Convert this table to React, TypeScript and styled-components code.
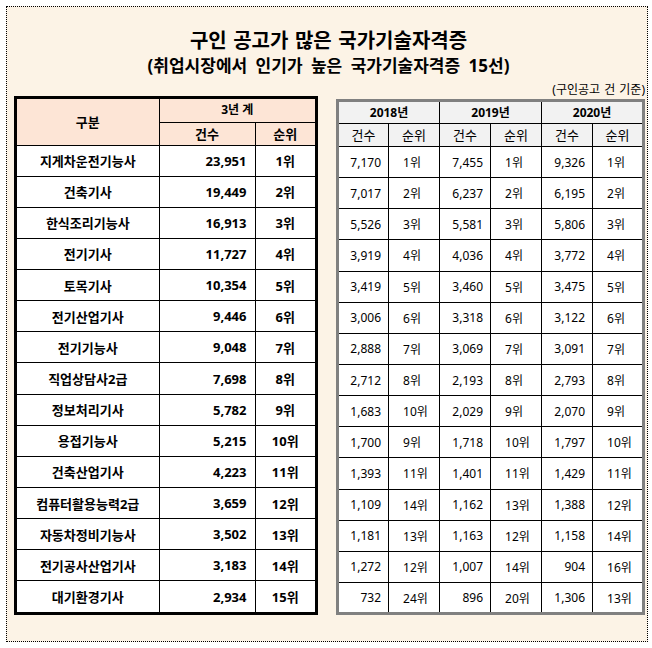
import React from "react";
import styled, { createGlobalStyle } from "styled-components";

const GlobalStyle = createGlobalStyle`
  html, body { margin: 0; padding: 0; background: #fff; }
  body { font-family: "Noto Sans", "Noto Sans CJK KR", sans-serif; color: #000; }
`;

const Frame = styled.div`
  box-sizing: border-box;
  margin: 6px 0 0 6px;
  width: 642px;
  height: 636px;
  border: 1px dotted #000;
  background: #fcf3e6;
  padding: 21px 4px 0 7px;
  display: flex;
  flex-direction: column;
`;

const Title = styled.h1`
  margin: 0;
  font-family: "Noto Sans CJK KR", sans-serif;
  font-size: 20px;
  font-weight: 700;
  line-height: 24px;
  word-spacing: 2px;
  text-align: center;
`;

const Subtitle = styled.h2`
  margin: 3px 0 0;
  font-family: "Noto Sans", "Noto Sans CJK KR", sans-serif;
  font-size: 17px;
  font-weight: 700;
  line-height: 21px;
  word-spacing: 4px;
  text-align: center;
`;

const TablesRow = styled.div`
  display: flex;
  align-items: flex-end;
  gap: 18px;
  margin-top: 7px;
`;

const Column = styled.div`
  display: flex;
  flex-direction: column;
  align-items: flex-end;
`;

const Note = styled.div`
  font-family: "Noto Sans", "Noto Sans CJK KR", sans-serif;
  font-size: 12px;
  line-height: 14px;
  word-spacing: 1px;
  margin-bottom: 2px;
`;

const ThickBox = styled.div`
  border: 3px solid #000;
  background: #fff;
`;

const Table = styled.table<{ $w: number }>`
  border-collapse: collapse;
  table-layout: fixed;
  width: ${(p) => p.$w}px;
  background: #fff;
  border-style: ${(p) => (p.$w < 300 ? "hidden" : "solid")};
`;

const HeadCell = styled.th<{ $bg: string; $bold?: boolean; $size?: number }>`
  background: ${(p) => p.$bg};
  border: 1px solid #000;
  font-weight: ${(p) => (p.$bold ? 700 : 400)};
  font-size: ${(p) => p.$size ?? 13}px;
  text-align: center;
  padding: 0;
  line-height: 14px;
`;

const HeadRow = styled.tr<{ $h: number }>`
  height: ${(p) => p.$h}px;
`;

const BodyRow = styled.tr`
  height: 31.15px;
`;

const NameCell = styled.td`
  border: 1px solid #000;
  text-align: center;
  font-weight: 700;
  font-size: 13px;
  padding: 0;
`;

const BigNum = styled.td`
  border: 1px solid #000;
  text-align: right;
  font-weight: 700;
  font-size: 13px;
  padding: 0 8px 0 0;
`;

const BigRank = styled.td`
  border: 1px solid #000;
  text-align: center;
  font-weight: 700;
  font-size: 13px;
  padding: 0;
`;

const SmallNum = styled.td`
  border: 1px solid #000;
  text-align: right;
  font-size: 12px;
  padding: 0 7px 0 0;
`;

const SmallRank = styled.td`
  border: 1px solid #000;
  text-align: left;
  font-size: 12px;
  padding: 0 0 0 14px;
`;

const rows: string[][] = [
  ["지게차운전기능사", "23,951", "1위", "7,170", "1위", "7,455", "1위", "9,326", "1위"],
  ["건축기사", "19,449", "2위", "7,017", "2위", "6,237", "2위", "6,195", "2위"],
  ["한식조리기능사", "16,913", "3위", "5,526", "3위", "5,581", "3위", "5,806", "3위"],
  ["전기기사", "11,727", "4위", "3,919", "4위", "4,036", "4위", "3,772", "4위"],
  ["토목기사", "10,354", "5위", "3,419", "5위", "3,460", "5위", "3,475", "5위"],
  ["전기산업기사", "9,446", "6위", "3,006", "6위", "3,318", "6위", "3,122", "6위"],
  ["전기기능사", "9,048", "7위", "2,888", "7위", "3,069", "7위", "3,091", "7위"],
  ["직업상담사2급", "7,698", "8위", "2,712", "8위", "2,193", "8위", "2,793", "8위"],
  ["정보처리기사", "5,782", "9위", "1,683", "10위", "2,029", "9위", "2,070", "9위"],
  ["용접기능사", "5,215", "10위", "1,700", "9위", "1,718", "10위", "1,797", "10위"],
  ["건축산업기사", "4,223", "11위", "1,393", "11위", "1,401", "11위", "1,429", "11위"],
  ["컴퓨터활용능력2급", "3,659", "12위", "1,109", "14위", "1,162", "13위", "1,388", "12위"],
  ["자동차정비기능사", "3,502", "13위", "1,181", "13위", "1,163", "12위", "1,158", "14위"],
  ["전기공사산업기사", "3,183", "14위", "1,272", "12위", "1,007", "14위", "904", "16위"],
  ["대기환경기사", "2,934", "15위", "732", "24위", "896", "20위", "1,306", "13위"],
];

const PEACH = "#fde5d6";
const GRAY = "#f2f2f2";

export default function App() {
  return (
    <>
      <GlobalStyle />
      <Frame>
        <Title>구인 공고가 많은 국가기술자격증</Title>
        <Subtitle>(취업시장에서 인기가 높은 국가기술자격증 15선)</Subtitle>
        <TablesRow>
          <Column>
            <ThickBox>
              <Table $w={298}>
                <colgroup>
                  <col style={{ width: 142 }} />
                  <col style={{ width: 96 }} />
                  <col style={{ width: 60 }} />
                </colgroup>
                <thead>
                  <HeadRow $h={23}>
                    <HeadCell $bg={PEACH} $bold rowSpan={2}>구분</HeadCell>
                    <HeadCell $bg={PEACH} $bold $size={12} colSpan={2}>3년 계</HeadCell>
                  </HeadRow>
                  <HeadRow $h={23}>
                    <HeadCell $bg={PEACH} $bold>건수</HeadCell>
                    <HeadCell $bg={PEACH} $bold>순위</HeadCell>
                  </HeadRow>
                </thead>
                <tbody>
                  {rows.map((r) => (
                    <BodyRow key={r[0]}>
                      <NameCell>{r[0]}</NameCell>
                      <BigNum>{r[1]}</BigNum>
                      <BigRank>{r[2]}</BigRank>
                    </BodyRow>
                  ))}
                </tbody>
              </Table>
            </ThickBox>
          </Column>
          <Column>
            <Note>(구인공고 건 기준)</Note>
            <Table $w={306}>
              <colgroup>
                {[0, 1, 2, 3, 4, 5].map((i) => (
                  <col key={i} style={{ width: 51 }} />
                ))}
              </colgroup>
              <thead>
                <HeadRow $h={23}>
                  {["2018년", "2019년", "2020년"].map((y) => (
                    <HeadCell key={y} $bg={GRAY} $bold $size={12} colSpan={2}>
                      {y}
                    </HeadCell>
                  ))}
                </HeadRow>
                <HeadRow $h={23}>
                  {[0, 1, 2].map((i) => (
                    <React.Fragment key={i}>
                      <HeadCell $bg={GRAY}>건수</HeadCell>
                      <HeadCell $bg={GRAY}>순위</HeadCell>
                    </React.Fragment>
                  ))}
                </HeadRow>
              </thead>
              <tbody>
                {rows.map((r) => (
                  <BodyRow key={r[0]}>
                    <SmallNum>{r[3]}</SmallNum>
                    <SmallRank>{r[4]}</SmallRank>
                    <SmallNum>{r[5]}</SmallNum>
                    <SmallRank>{r[6]}</SmallRank>
                    <SmallNum>{r[7]}</SmallNum>
                    <SmallRank>{r[8]}</SmallRank>
                  </BodyRow>
                ))}
              </tbody>
            </Table>
          </Column>
        </TablesRow>
      </Frame>
    </>
  );
}
